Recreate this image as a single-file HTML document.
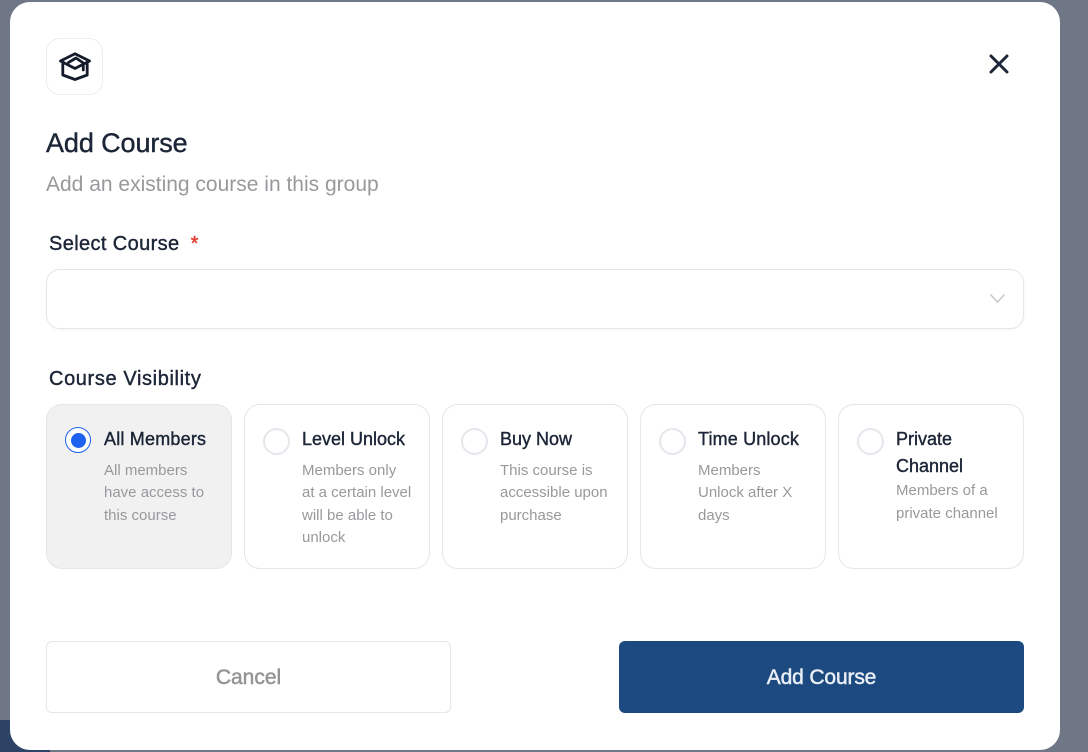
<!DOCTYPE html>
<html>
<head>
<meta charset="utf-8">
<style>
html,body{margin:0;padding:0;width:1088px;height:752px;overflow:hidden;background:#6f7787;}
body{position:relative;font-family:"Liberation Sans",sans-serif;}
.a{position:absolute;white-space:nowrap;}
.m{-webkit-text-stroke:0.4px currentColor;}
.modal{position:absolute;left:10px;top:2px;width:1050px;height:748px;background:#fff;border-radius:20px;}
.card{position:absolute;top:404px;width:184px;height:163px;border:1px solid #e6e6e8;border-radius:16px;background:#fff;}
.radio{position:absolute;width:23px;height:23px;top:428px;border:2px solid #e6e6ec;border-radius:50%;background:#fff;}
.t{font-size:18px;line-height:27px;color:#1c2637;}
.d{font-size:15px;line-height:22.5px;color:#98999c;}
</style>
</head>
<body>
<div class="a" style="left:0;top:720px;width:50px;height:32px;background:#2c4366;"></div>
<div class="modal"></div>

<div class="a" style="left:46px;top:38px;width:55px;height:55px;border:1px solid #ececf2;border-radius:14px;background:#fff;"></div>
<svg class="a" style="left:50px;top:42px" width="50" height="50" viewBox="0 0 50 50" fill="none" stroke="#141c2c" stroke-width="2.8" stroke-linejoin="round" stroke-linecap="round">
<path d="M25 11.8 L39.5 19 L25 26.5 L10.5 19 Z"/>
<path d="M12.8 22 V33 L25 37.5 L37.2 33 V22"/>
<path d="M18.5 20.5 L26 16 L33.3 21 V28"/>
</svg>
<svg class="a" style="left:986px;top:52px" width="26" height="24" viewBox="0 0 26 24" fill="none" stroke="#1c2637" stroke-width="3" stroke-linecap="round">
<path d="M5 4 L21 20 M21 4 L5 20"/>
</svg>

<div class="a m" style="left:46px;top:125px;font-size:27px;line-height:36px;color:#1c2637;letter-spacing:-0.1px;">Add Course</div>
<div class="a" style="left:46px;top:172px;font-size:21px;line-height:26px;color:#98999c;">Add an existing course in this group</div>

<div class="a m" style="left:49px;top:231px;font-size:20px;line-height:26px;color:#1c2637;letter-spacing:.38px;">Select Course<span style="color:#e23b2e;margin-left:11px;">*</span></div>
<div class="a" style="left:46px;top:269px;width:976px;height:58px;border:1px solid #e6e6e8;border-radius:14px;background:#fff;box-shadow:0 1px 2px rgba(0,0,0,.04);"></div>
<svg class="a" style="left:988px;top:292px" width="20" height="14" viewBox="0 0 20 14" fill="none" stroke="#c8c8cc" stroke-width="1.5">
<path d="M2.5 2.5 L9.5 10 L16.5 2.5"/>
</svg>

<div class="a m" style="left:49px;top:366px;font-size:20px;line-height:26px;color:#1c2637;letter-spacing:.62px;">Course Visibility</div>

<div class="card" style="left:46px;background:#f1f1f2;"></div>
<div class="card" style="left:244px;"></div>
<div class="card" style="left:442px;"></div>
<div class="card" style="left:640px;"></div>
<div class="card" style="left:838px;"></div>

<div class="a" style="left:65px;top:427px;width:24px;height:24px;border:1.5px solid #1d63f0;border-radius:50%;background:#fff;"></div>
<div class="a" style="left:71px;top:433px;width:15px;height:15px;border-radius:50%;background:#1d63f0;"></div>
<div class="radio" style="left:263px;"></div>
<div class="radio" style="left:461px;"></div>
<div class="radio" style="left:659px;"></div>
<div class="radio" style="left:857px;"></div>

<div class="a t m" style="left:104px;top:426px;letter-spacing:.2px;">All Members</div>
<div class="a d" style="left:104px;top:459.9px;">All members<br>have access to<br>this course</div>

<div class="a t m" style="left:302px;top:426px;">Level Unlock</div>
<div class="a d" style="left:302px;top:459.9px;">Members only<br>at a certain level<br>will be able to<br>unlock</div>

<div class="a t m" style="left:500px;top:426px;">Buy Now</div>
<div class="a d" style="left:500px;top:459.9px;">This course is<br>accessible upon<br>purchase</div>

<div class="a t m" style="left:698px;top:426px;letter-spacing:.15px;">Time Unlock</div>
<div class="a d" style="left:698px;top:459.9px;">Members<br>Unlock after X<br>days</div>

<div class="a t m" style="left:896px;top:426px;">Private<br>Channel</div>
<div class="a d" style="left:896px;top:480px;line-height:22.5px;">Members of a<br>private channel</div>

<div class="a" style="left:46px;top:641px;width:403px;height:70px;border:1px solid #e6e6e8;border-radius:6px;background:#fff;text-align:center;font-size:21px;line-height:71px;color:#939496;-webkit-text-stroke:.5px #939496;">Cancel</div>
<div class="a" style="left:619px;top:641px;width:405px;height:72px;border-radius:6px;background:#1c4980;text-align:center;font-size:21px;line-height:73px;color:#e9eef5;-webkit-text-stroke:.5px #e9eef5;letter-spacing:-.15px;">Add Course</div>
</body>
</html>
